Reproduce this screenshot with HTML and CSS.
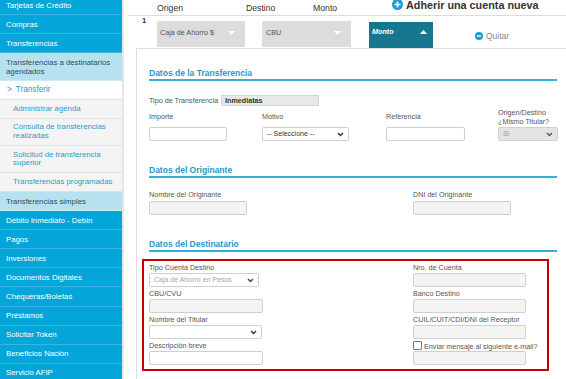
FILE: index.html
```html
<!DOCTYPE html>
<html lang="es">
<head>
    <meta charset="UTF-8">
    <meta name="viewport" content="width=device-width, initial-scale=1.0">
    <title>Transferencias</title>
    <link rel="stylesheet" href="styles.css">
</head>
<body>
    <nav class="sidebar">
        <div class="nav-item nav-first">Tarjetas de Crédito</div>
        <div class="nav-item">Compras</div>
        <div class="nav-item">Transferencias</div>
        <div class="nav-item nav-group">Transferencias a destinatarios agendados</div>
        <div class="nav-sub active"><span class="caret">&gt;</span>Transferir</div>
        <div class="nav-sub">Administrar agenda</div>
        <div class="nav-sub">Consulta de transferencias realizadas</div>
        <div class="nav-sub">Solicitud de transferencia superior</div>
        <div class="nav-sub">Transferencias programadas</div>
        <div class="nav-item nav-group">Transferencias simples</div>
        <div class="nav-item">Débito Inmediato - Debin</div>
        <div class="nav-item">Pagos</div>
        <div class="nav-item">Inversiones</div>
        <div class="nav-item">Documentos Digitales</div>
        <div class="nav-item">Chequeras/Boletas</div>
        <div class="nav-item">Préstamos</div>
        <div class="nav-item">Solicitar Token</div>
        <div class="nav-item">Beneficios Nación</div>
        <div class="nav-item">Servicio AFIP</div>
    </nav>

    <main class="content">
        <div class="grid-head">
            <span class="col-origen">Origen</span>
            <span class="col-destino">Destino</span>
            <span class="col-monto">Monto</span>
            <span class="add-account">
                <svg width="11" height="11" viewBox="0 0 11 11"><circle cx="5.5" cy="5.5" r="5.5" fill="#1b9bd8"/><path d="M5.5 2.5v6M2.5 5.5h6" stroke="#fff" stroke-width="1.6"/></svg>
                Adherir una cuenta nueva
            </span>
        </div>

        <div class="grid-row">
            <span class="row-num">1</span>
            <div class="pick">Caja de Ahorro $
                <svg class="pick-arrow" width="7" height="4" viewBox="0 0 7 4"><polygon points="0,0 7,0 3.5,4" fill="#fff"/></svg>
            </div>
            <div class="pick pick-cbu">CBU
                <svg class="pick-arrow" width="7" height="4" viewBox="0 0 7 4"><polygon points="0,0 7,0 3.5,4" fill="#fff"/></svg>
            </div>
            <div class="pick pick-monto">Monto
                <svg class="pick-arrow" width="7" height="4" viewBox="0 0 7 4"><polygon points="0,4 7,4 3.5,0" fill="#fff"/></svg>
            </div>
            <span class="remove">
                <svg width="8" height="8" viewBox="0 0 8 8"><circle cx="4" cy="4" r="4" fill="#1b9bd8"/><path d="M2 4h4" stroke="#fff" stroke-width="1.4"/></svg>
                Quitar
            </span>
        </div>

        <section class="panel">
            <h2 class="section-title">Datos de la Transferencia</h2>
            <div class="tipo-row">
                <span class="label">Tipo de Transferencia</span>
                <span class="readonly">Inmediatas</span>
            </div>
            <div class="fields-4">
                <div class="field">
                    <span class="label">Importe</span>
                    <div class="input w-importe"></div>
                </div>
                <div class="field">
                    <span class="label">Motivo</span>
                    <div class="select w-motivo">-- Seleccione --
                        <svg class="chev" width="7" height="5" viewBox="0 0 7 5"><path d="M1 1l2.5 2.5L6 1" fill="none" stroke="#333" stroke-width="1.4"/></svg>
                    </div>
                </div>
                <div class="field">
                    <span class="label">Referencia</span>
                    <div class="input w-ref"></div>
                </div>
                <div class="field">
                    <span class="label label-two">Origen/Destino<br>¿Mismo Titular?</span>
                    <div class="select select-off w-titular">Si
                        <svg class="chev" width="7" height="5" viewBox="0 0 7 5"><path d="M1 1l2.5 2.5L6 1" fill="none" stroke="#555" stroke-width="1.4"/></svg>
                    </div>
                </div>
            </div>

            <h2 class="section-title">Datos del Originante</h2>
            <div class="fields-2">
                <div class="field">
                    <span class="label">Nombre del Originante</span>
                    <div class="input input-off w-orig"></div>
                </div>
                <div class="field">
                    <span class="label">DNI del Originante</span>
                    <div class="input input-off w-orig"></div>
                </div>
            </div>

            <h2 class="section-title">Datos del Destinatario</h2>
            <div class="dest-box">
                <div class="dest-col">
                    <span class="label">Tipo Cuenta Destino</span>
                    <div class="select select-dim w-tipo">Caja de Ahorro en Pesos
                        <svg class="chev" width="7" height="5" viewBox="0 0 7 5"><path d="M1 1l2.5 2.5L6 1" fill="none" stroke="#444" stroke-width="1.4"/></svg>
                    </div>
                    <span class="label">CBU/CVU</span>
                    <div class="input input-off w-dest"></div>
                    <span class="label">Nombre del Titular</span>
                    <div class="select w-dest-sel">
                        <svg class="chev" width="7" height="5" viewBox="0 0 7 5"><path d="M1 1l2.5 2.5L6 1" fill="none" stroke="#333" stroke-width="1.4"/></svg>
                    </div>
                    <span class="label">Descripción breve</span>
                    <div class="input w-dest"></div>
                </div>
                <div class="dest-col">
                    <span class="label">Nro. de Cuenta</span>
                    <div class="input input-off w-dest-r"></div>
                    <span class="label">Banco Destino</span>
                    <div class="input input-off w-dest-r"></div>
                    <span class="label">CUIL/CUIT/CDI/DNI del Receptor</span>
                    <div class="input input-off w-dest-r"></div>
                    <span class="label"><span class="check"></span>Enviar mensaje al siguiente e-mail?</span>
                    <div class="input input-off w-dest-r"></div>
                </div>
            </div>
        </section>
    </main>
</body>
</html>
```

FILE: styles.css
```css
body {
    margin: 0;
    display: flex;
    height: 379px;
    overflow: hidden;
    background-color: #fff;
    font-family: "Liberation Sans", Arial, sans-serif;
    color: #555;
}

/* sidebar */
.sidebar {
    width: 122px;
    flex-shrink: 0;
    border-right: 2px solid #e6e6e6;
    background-color: #f4f4f4;
    margin-top: -4px;
}
.nav-item {
    background-color: #04a5d8;
    color: #fff;
    font-size: 7.8px;
    line-height: 9px;
    padding: 4.55px 4px 4.55px 6px;
    border-bottom: 1px solid #36b6e0;
}
.nav-group {
    background-color: #b6e1ee;
    color: #2e4d5a;
    border-bottom-color: #cde9f2;
}
.nav-sub {
    background-color: #f4f4f4;
    color: #2a9bc4;
    font-size: 7.8px;
    line-height: 8.6px;
    padding: 4.55px 4px 4.55px 13px;
    border-bottom: 1px solid #e2e2e2;
}
.nav-sub.active {
    background-color: #fff;
    padding-left: 7px;
    font-size: 8.2px;
}
.caret {
    margin-right: 4px;
}

/* main */
.content {
    flex: 1;
    display: flex;
    flex-direction: column;
    padding-left: 4px;
    min-width: 0;
}
.grid-head {
    height: 15px;
    display: flex;
    align-items: flex-start;
    border-bottom: 1px solid #dcdcdc;
    font-size: 8.7px;
    color: #333;
    line-height: 10px;
}
.grid-head > span {
    padding-top: 3px;
}
.col-origen {
    margin-left: 29px;
    width: 89px;
}
.col-destino {
    width: 67px;
}
.col-monto {
    width: 79px;
}
.grid-head .add-account {
    display: flex;
    align-items: center;
    gap: 3px;
    padding-top: 0;
    margin-top: -1px;
    font-size: 10.8px;
    font-weight: bold;
    color: #333;
    white-space: nowrap;
}

.grid-row {
    height: 32px;
    display: flex;
    align-items: flex-start;
}
.row-num {
    width: 15px;
    padding-left: 14px;
    padding-top: 1px;
    font-size: 7.5px;
    font-weight: bold;
    color: #333;
    line-height: 8px;
}
.pick {
    position: relative;
    width: 88px;
    height: 26px;
    margin-top: 5px;
    padding: 7px 0 0 3px;
    box-sizing: border-box;
    background-color: #dcdcdc;
    font-size: 7.2px;
    line-height: 9px;
    color: #555;
}
.pick-cbu {
    width: 89px;
    margin-left: 17px;
    padding-left: 4px;
}
.pick-monto {
    width: 64px;
    margin-left: 18px;
    margin-top: 6px;
    padding-top: 5px;
    background-color: #17778f;
    color: #fff;
    font-weight: bold;
    font-style: italic;
}
.pick-arrow {
    position: absolute;
    right: 10px;
    top: 10px;
}
.pick-monto .pick-arrow {
    top: 8px;
    right: 6px;
}
.remove {
    display: flex;
    align-items: center;
    gap: 3px;
    margin: 15px 0 0 42px;
    font-size: 8.5px;
    color: #8a8a8a;
}

/* panel */
.panel {
    flex: 1;
    margin-left: 8px;
    border-left: 1px solid #dcdcdc;
    border-top: 1px solid #dcdcdc;
    padding: 0 9px 0 12px;
}
.section-title {
    margin: 24px 0 0;
    padding-bottom: 1px;
    border-bottom: 2px solid #36b1d6;
    font-size: 8.5px;
    line-height: 10px;
    font-weight: bold;
    color: #1f9ac6;
}
.section-title:first-child {
    margin-top: 19px;
}
.label {
    display: block;
    font-size: 7.2px;
    line-height: 9px;
    color: #555;
    white-space: nowrap;
}
.tipo-row {
    display: flex;
    align-items: center;
    margin-top: 14px;
}
.tipo-row .label {
    width: 72px;
}
.readonly {
    width: 98px;
    height: 11px;
    box-sizing: border-box;
    background-color: #e8e8e8;
    border: 1px solid #d4d4d4;
    padding-left: 3px;
    font-size: 7.2px;
    line-height: 9px;
    font-weight: bold;
    color: #333;
}

.fields-4 {
    display: grid;
    grid-template-columns: 113px 124px 112px 1fr;
    margin-top: 2px;
    height: 33px;
}
.field {
    display: flex;
    flex-direction: column;
}
.fields-4 .label {
    padding-top: 4px;
}
.fields-4 .label-two {
    padding-top: 0;
}
.fields-4 .input,
.fields-4 .select {
    margin-top: auto;
}
.input,
.select {
    position: relative;
    height: 14px;
    box-sizing: border-box;
    border: 1px solid #cfcfcf;
    border-radius: 2px;
    background-color: #fff;
}
.input-off {
    background-color: #f4f4f4;
}
.select {
    padding-left: 4px;
    font-size: 7px;
    line-height: 12px;
    color: #333;
}
.select-off {
    background-color: #e4e4e4;
    color: #999;
}
.select-dim {
    color: #a6a6a6;
}
.chev {
    position: absolute;
    right: 4px;
    top: 4px;
}
.w-importe { width: 78px; }
.w-motivo { width: 87px; }
.w-ref { width: 79px; }
.w-titular { width: 60px; }
.w-orig { width: 98px; }
.w-tipo { width: 110px; }
.w-dest { width: 114px; }
.w-dest-sel { width: 113px; }
.w-dest-r { width: 113px; }

.fields-2 {
    display: grid;
    grid-template-columns: 264px 1fr;
    margin-top: 12px;
}
.fields-2 .input {
    margin-top: 2px;
}

/* destinatario */
.dest-box {
    display: grid;
    grid-template-columns: 264px 1fr;
    margin: 7px 8px 0 -7px;
    padding: 2px 0 4px 5px;
    border: 2px solid #c40000;
}
.dest-col .label {
    height: 10px;
    line-height: 10px;
}
.dest-col .input,
.dest-col .select {
    margin-bottom: 2px;
}
.dest-col .input:last-child {
    margin-bottom: 0;
}
.check {
    display: inline-block;
    width: 7px;
    height: 7px;
    margin-right: 2px;
    border: 1px solid #777;
    border-radius: 1px;
    vertical-align: -1px;
}
```
